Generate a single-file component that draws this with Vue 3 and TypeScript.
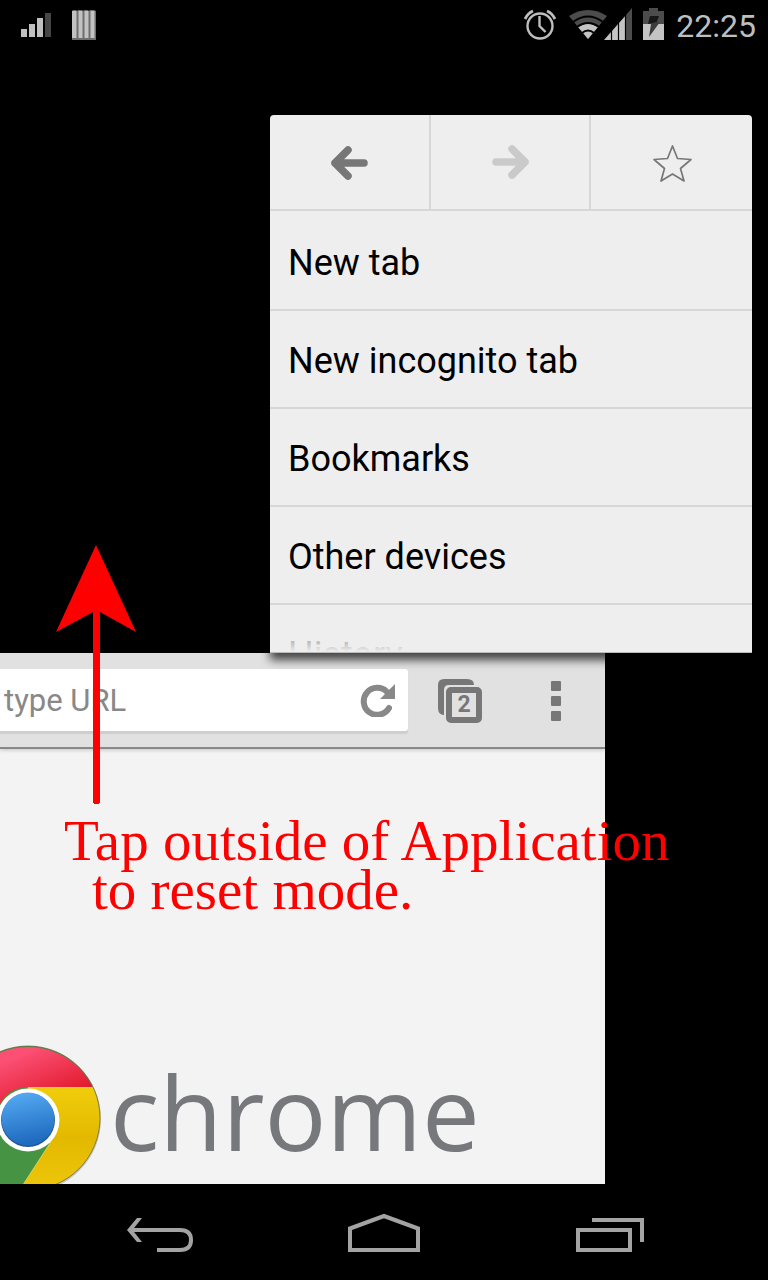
<script setup lang="ts">
import { ref } from 'vue'

const menuItems: string[] = ['New tab', 'New incognito tab', 'Bookmarks', 'Other devices', 'History']
const address = ref<string>('')
const tabCount = 2
</script>

<template>
  <div class="screen">
    <header class="status">
      <div class="status-side">
        <svg class="ic-signal" viewBox="20 10 32 30" aria-hidden="true">
          <path d="M21 29h6v8h-6zM29 24h6v13h-6zM37 18h6v19h-6z" fill="#c0c0c0" />
          <path d="M45 13h6v24h-6z" fill="#464646" />
        </svg>
        <svg class="ic-bars" viewBox="72 10 24 30" aria-hidden="true">
          <path d="M72 11l1-1h3l1 1 1-1h4l1 1 1-1h4l1 1 1-1h4l2 1v29h-24z" fill="#6e6e6e" />
          <path d="M72 11h4.500v27h-4.500zM78.500 11h4v27h-4zM84.500 11h4v27h-4zM90.500 11h4v27h-4z" fill="#c2c2c2" />
        </svg>
      </div>
      <div class="status-side status-right">
        <svg class="ic-alarm" viewBox="521 8 36 34" aria-hidden="true">
          <g fill="none" stroke="#bebebe" stroke-width="2.400">
            <circle cx="540" cy="27" r="12.500" />
            <path d="M539.500 17v10l6 6" />
            <path d="M525 20q3-6 8-8M555 20q-3-6-8-8" stroke-width="2.800" />
          </g>
        </svg>
        <svg class="ic-wifi" viewBox="568 8 64 32" aria-hidden="true">
          <path d="M588 39L569 16Q578 10 588 10T607 16z" fill="#4c4c4c" />
          <path d="M588 39L578 27Q588 20 598 27z" fill="#c4c4c4" />
          <g fill="none" stroke="#000" stroke-width="2">
            <path d="M573 22Q588 11 603 22M577 27Q588 19 599 27M582 33Q588 28 594 33" />
          </g>
          <path d="M604 40L626 15V40z" fill="#c4c4c4" />
          <path d="M626 15L632 8V40H626z" fill="#4c4c4c" />
          <path d="M611.500 28V40M618.500 20V40M625.500 14V40" stroke="#000" stroke-width="1.200" />
        </svg>
        <svg class="ic-battery" viewBox="643 8 21 32" aria-hidden="true">
          <path d="M649 8h9v3h6v13h-21V11h6z" fill="#4c4c4c" />
          <path d="M643 24h21v16h-21z" fill="#c4c4c4" />
          <path d="M650 16h9l-3 8h-8z" fill="#171717" />
          <path d="M648 24h3l-2 13 11-15h-4z" fill="#3c3c3c" />
        </svg>
        <time class="clock">22:25</time>
      </div>
    </header>

    <main class="stage">
      <nav class="menu" aria-label="Browser menu">
        <div class="menu-actions">
          <button type="button" class="action" aria-label="Back">
            <svg viewBox="0 0 40 40" aria-hidden="true">
              <path d="M19 7L6 20L19 33M6 20H35" fill="none" stroke="#777" stroke-width="7.500" stroke-linecap="round" stroke-linejoin="round" />
            </svg>
          </button>
          <button type="button" class="action" aria-label="Forward" disabled>
            <svg viewBox="0 0 40 40" aria-hidden="true">
              <path d="M22 6L35 19L22 32M35 19H6" fill="none" stroke="#cacaca" stroke-width="7.500" stroke-linecap="round" stroke-linejoin="round" />
            </svg>
          </button>
          <button type="button" class="action" aria-label="Bookmark this page">
            <svg viewBox="0 0 40 40" aria-hidden="true">
              <path d="M20.500 3L25.500 15.500L39 16.500L28.500 25.500L32 38L20.500 31L9 38L12.500 25.500L2 16.500L15.500 15.500Z" fill="none" stroke="#777" stroke-width="1.700" stroke-linejoin="round" />
            </svg>
          </button>
        </div>
        <ul class="menu-list">
          <li v-for="item in menuItems" :key="item">
            <button type="button" class="menu-item">{{ item }}</button>
          </li>
        </ul>
      </nav>

      <section class="browser">
        <div class="toolbar">
          <div class="address">
            <input v-model="address" type="text" placeholder="type URL" aria-label="Address" />
            <button type="button" class="plain" aria-label="Reload">
              <svg class="ic-reload" viewBox="360 684 36 34" aria-hidden="true">
                <path d="M389 709A13.500 13.500 0 1 1 387 693" fill="none" stroke="#888" stroke-width="6" stroke-linecap="round" />
                <path d="M395 685V700H380z" fill="#888" />
              </svg>
            </button>
          </div>
          <button type="button" class="tool tabs" :aria-label="`${tabCount} open tabs`">
            <svg class="ic-tabs" viewBox="0 0 44 44" aria-hidden="true">
              <path d="M6 36Q0 36 0 29V6Q0 0 6 0H29Q36 0 36 6H11Q6 6 6 11z" fill="#777" />
              <rect x="11" y="11" width="30" height="30" rx="2" fill="#e1e1e1" stroke="#777" stroke-width="6" />
            </svg>
            <span class="tab-count">{{ tabCount }}</span>
          </button>
          <button type="button" class="tool" aria-label="More options">
            <svg class="ic-more" viewBox="0 0 10 40" aria-hidden="true">
              <g fill="#777">
                <rect width="10" height="10" rx="1" />
                <rect y="15" width="10" height="10" rx="1" />
                <rect y="30" width="10" height="10" rx="1" />
              </g>
            </svg>
          </button>
        </div>
        <div class="page">
          <svg class="logo" viewBox="0 1042 104 142" aria-hidden="true">
            <defs>
              <linearGradient id="logoRed" x1="0" y1="0" x2="0.800" y2="1">
                <stop offset="0.300" stop-color="#fb4f73" />
                <stop offset="1" stop-color="#d90714" />
              </linearGradient>
              <linearGradient id="logoYellow" x1="0" y1="0" x2="0" y2="1">
                <stop offset="0" stop-color="#f0cd0c" />
                <stop offset="0.500" stop-color="#e3b900" />
                <stop offset="1" stop-color="#edc60a" />
              </linearGradient>
              <linearGradient id="logoBlue" x1="0" y1="0" x2="0.200" y2="1">
                <stop offset="0" stop-color="#58aef5" />
                <stop offset="1" stop-color="#1f6bc0" />
              </linearGradient>
            </defs>
            <circle cx="28" cy="1119" r="73" fill="#c4c4c4" />
            <circle cx="28" cy="1118" r="72" fill="#469443" />
            <path d="M28 1087H93A72 72 0 0 1 28 1190L21 1188L56 1134z" fill="url(#logoYellow)" stroke="#e0d052" stroke-width="1" />
            <path d="M-44 1118A72 72 0 0 1 92.500 1087H28Q8 1088 0 1104L-30 1118z" fill="url(#logoRed)" />
            <circle cx="28" cy="1118" r="72" fill="none" stroke="#64593c" stroke-opacity="0.700" stroke-width="1" />
            <circle cx="28" cy="1120" r="31.500" fill="#fff" />
            <circle cx="28" cy="1120" r="27" fill="#28548a" />
            <circle cx="28" cy="1119" r="26.500" fill="url(#logoBlue)" />
          </svg>
          <span class="wordmark">chrome</span>
        </div>
      </section>

      <div class="hint">
        <svg class="hint-arrow" viewBox="0 0 80 259" aria-hidden="true">
          <path d="M40 0L80 87L44 67V258H43V259H38V258H37V67L0 87z" fill="#f00" />
        </svg>
        <p class="hint-text">Tap outside of Application<br /><span class="hint-second">to reset mode.</span></p>
      </div>
    </main>

    <nav class="system" aria-label="System navigation">
      <button type="button" aria-label="System back">
        <svg viewBox="119 1208 80 48" aria-hidden="true">
          <path d="M130 1230H180Q191 1230 191 1240T180 1250H157" fill="none" stroke="#a3a3a3" stroke-width="4" />
          <path d="M137 1218H142L132.500 1230L142 1242H137L127 1230z" fill="#a3a3a3" />
        </svg>
      </button>
      <button type="button" aria-label="Home">
        <svg viewBox="344 1208 80 48" aria-hidden="true">
          <path d="M350 1228.500L384 1216L418 1228.500V1250H350z" fill="none" stroke="#a3a3a3" stroke-width="4" />
        </svg>
      </button>
      <button type="button" aria-label="Recent apps">
        <svg viewBox="569 1208 80 48" aria-hidden="true">
          <path d="M578 1230H630V1250H578zM592 1220H642V1242" fill="none" stroke="#a3a3a3" stroke-width="4" />
        </svg>
      </button>
    </nav>
  </div>
</template>

<style>
body {
  margin: 0;
  background: #000;
}
</style>

<style scoped>
.screen {
  display: flex;
  flex-direction: column;
  min-height: 100vh;
  overflow: hidden;
  background: #000;
  font-family: Roboto, "Liberation Sans", sans-serif;
}

svg {
  display: block;
}

button {
  margin: 0;
  padding: 0;
  border: 0;
  background: none;
  font: inherit;
}

.status {
  display: flex;
  justify-content: space-between;
  height: 50px;
  padding: 0 12px 0 20px;
}

.status-side {
  display: flex;
  align-items: center;
  gap: 20px;
}

.status-right {
  gap: 11px;
  padding-bottom: 2px;
}

.ic-signal {
  width: 32px;
  height: 30px;
}

.ic-bars {
  width: 24px;
  height: 30px;
}

.ic-alarm {
  width: 36px;
  height: 34px;
}

.ic-wifi {
  width: 64px;
  height: 32px;
}

.ic-battery {
  width: 21px;
  height: 32px;
}

.clock {
  padding: 4px 0 0 1px;
  color: #bebebe;
  font-size: 32px;
  line-height: 44px;
}

.stage {
  position: relative;
  display: flex;
  flex: 1;
  flex-direction: column;
  padding-top: 65px;
}

.menu {
  position: relative;
  z-index: 1;
  height: 538px;
  margin: 0 16px 0 270px;
  border-radius: 4px 4px 0 0;
  background: #eee;
  box-shadow: 0 7px 10px 0 rgba(0, 0, 0, 0.7);
}

.menu::after {
  position: absolute;
  right: 0;
  bottom: 0;
  left: 0;
  height: 48px;
  border-bottom: 1px solid #bcbcbc;
  box-sizing: border-box;
  background: linear-gradient(rgba(238, 238, 238, 0), #eee);
  content: "";
  pointer-events: none;
}

.menu-actions {
  display: grid;
  grid-template-columns: repeat(3, 1fr);
  height: 94px;
  border-bottom: 2px solid #d7d7d7;
}

.action {
  display: flex;
  align-items: center;
  justify-content: center;
  padding-top: 2px;
}

.action:not(:last-child) {
  border-right: 2px solid #d7d7d7;
}

.action svg {
  width: 40px;
  height: 40px;
}

.menu-list {
  height: 442px;
  margin: 0;
  padding: 2px 0 0;
  box-sizing: border-box;
  overflow: hidden;
  list-style: none;
}

.menu-item {
  display: block;
  width: 100%;
  height: 98px;
  padding: 4px 18px 0;
  border-bottom: 2px solid #d7d7d7;
  color: #000;
  font-size: 36px;
  line-height: 92px;
  text-align: left;
}

.browser {
  display: flex;
  flex: 1;
  flex-direction: column;
  margin-right: 163px;
  overflow: hidden;
  background: #f3f3f3;
}

.toolbar {
  display: flex;
  align-items: center;
  height: 94px;
  padding-right: 44px;
  border-bottom: 2px solid #888;
  background: #e1e1e1;
  box-shadow: 0 1px 4px rgba(0, 0, 0, 0.2);
}

.address {
  display: flex;
  flex: 1;
  align-items: center;
  min-width: 0;
  height: 62px;
  padding-right: 12px;
  border-radius: 0 3px 3px 0;
  background: #fff;
  box-shadow: 0 3px 1px #cecece;
}

.address input {
  flex: 1;
  min-width: 0;
  height: 62px;
  padding: 0 4px;
  border: 0;
  outline: 0;
  background: transparent;
  color: #555;
  font: 31px Roboto, "Liberation Sans", sans-serif;
}

.address input::placeholder {
  color: #888;
  opacity: 1;
}

.ic-reload {
  width: 36px;
  height: 34px;
}

.tool {
  padding-top: 2px;
}

.tabs {
  display: grid;
  margin: 0 69px 0 30px;
}

.ic-tabs {
  grid-area: 1 / 1;
  width: 44px;
  height: 44px;
}

.tab-count {
  grid-area: 1 / 1;
  padding: 8px 0 0 8px;
  color: #777;
  font-size: 23px;
  font-weight: 700;
  line-height: 36px;
  text-align: center;
}

.ic-more {
  width: 10px;
  height: 40px;
}

.page {
  display: flex;
  flex: 1;
  align-items: flex-end;
}

.logo {
  flex: none;
  width: 104px;
  height: 142px;
}

.wordmark {
  padding: 0 0 8px 6px;
  color: #77787b;
  font-family: "Open Sans", "Noto Sans", sans-serif;
  font-size: 103px;
  line-height: 130px;
}

.hint {
  position: absolute;
  z-index: 2;
  top: 495px;
  left: 56px;
  color: #f00;
  pointer-events: none;
}

.hint-arrow {
  width: 80px;
  height: 259px;
}

.hint-text {
  margin: 12px 0 0 8px;
  font-family: "Liberation Serif", serif;
  font-size: 57px;
  line-height: 49px;
  white-space: nowrap;
}

.hint-second {
  padding-left: 28px;
}

.system {
  display: grid;
  grid-template-columns: repeat(3, 1fr);
  height: 96px;
  padding: 0 46px;
}

.system button {
  display: flex;
  align-items: center;
  justify-content: center;
}

.system svg {
  width: 80px;
  height: 48px;
}
</style>
